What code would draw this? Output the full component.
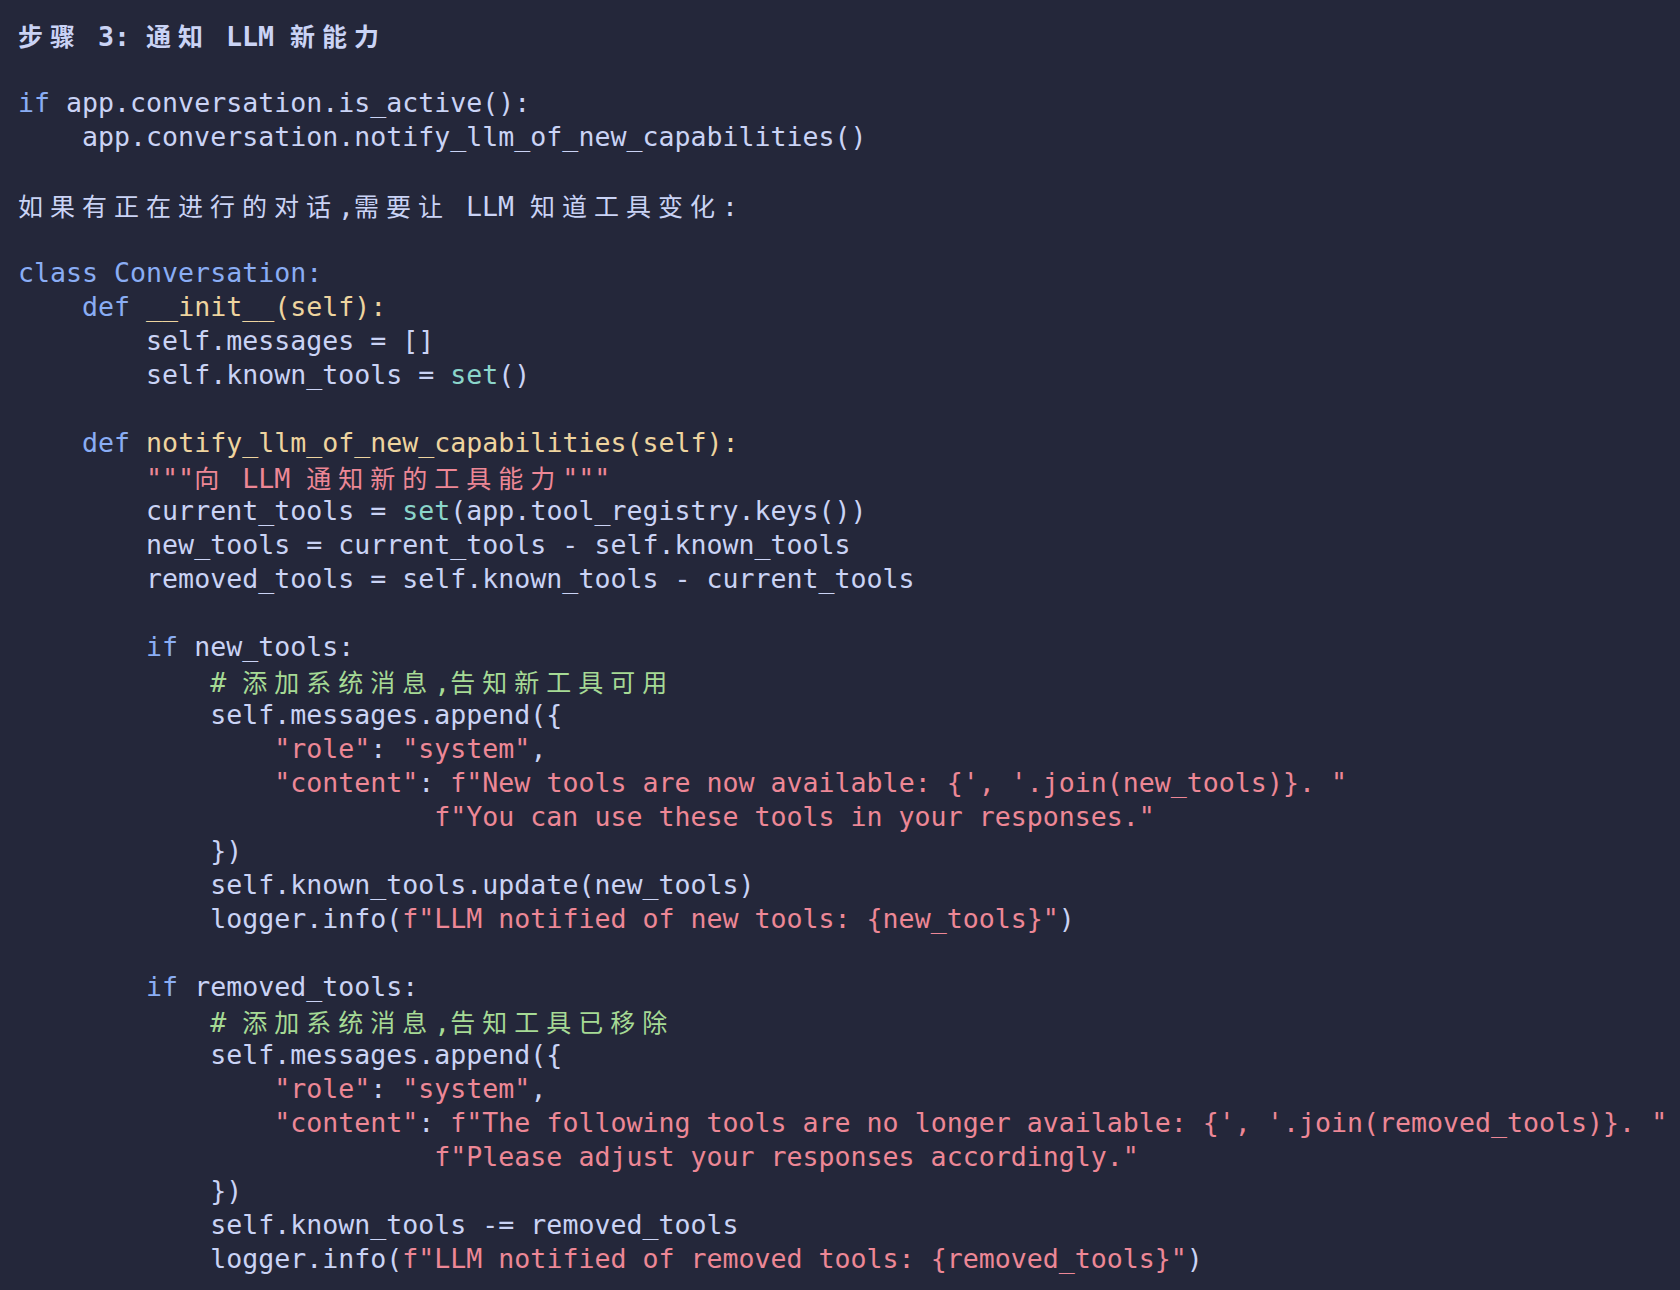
import React from 'react';

// 代码块截图复刻：等宽网格，CJK 字符占两格（32px）

type Tok = [string, string];

const C = {
  text: 'text-[#cad3f5]',
  kw: 'text-[#8aadf4]',
  fn: 'text-[#eed49f]',
  str: 'text-[#ed8796]',
  cm: 'text-[#a6da95]',
  bi: 'text-[#8bd5ca]',
};

const isWide = (ch: string) => /[\u3000-\u9fff\uff00-\uffef]/.test(ch);

function Run({ text, cls }: { text: string; cls: string }) {
  const parts: React.ReactNode[] = [];
  let buf = '';
  const chars = Array.from(text);
  chars.forEach((ch, i) => {
    if (isWide(ch)) {
      if (buf) {
        parts.push(buf);
        buf = '';
      }
      parts.push(
        <span
          key={i}
          className="inline-block w-[32px] text-left text-[25px] [font-family:'Noto_Sans_CJK_SC',sans-serif]"
        >
          {ch}
        </span>,
      );
    } else {
      buf += ch;
    }
  });
  if (buf) parts.push(buf);
  return <span className={cls}>{parts}</span>;
}

const sp = (n: number): Tok => ['text', ' '.repeat(n)];

const lines: Tok[][] = [
  [['kw', 'if'], ['text', ' app.conversation.is_active():']],
  [sp(4), ['text', 'app.conversation.notify_llm_of_new_capabilities()']],
  [],
  [['text', '如果有正在进行的对话,需要让 LLM 知道工具变化:']],
  [],
  [['kw', 'class Conversation:']],
  [sp(4), ['kw', 'def'], ['text', ' '], ['fn', '__init__(self):']],
  [sp(8), ['text', 'self.messages = []']],
  [sp(8), ['text', 'self.known_tools = '], ['bi', 'set'], ['text', '()']],
  [],
  [sp(4), ['kw', 'def'], ['text', ' '], ['fn', 'notify_llm_of_new_capabilities(self):']],
  [sp(8), ['str', '"""向 LLM 通知新的工具能力"""']],
  [sp(8), ['text', 'current_tools = '], ['bi', 'set'], ['text', '(app.tool_registry.keys())']],
  [sp(8), ['text', 'new_tools = current_tools - self.known_tools']],
  [sp(8), ['text', 'removed_tools = self.known_tools - current_tools']],
  [],
  [sp(8), ['kw', 'if'], ['text', ' new_tools:']],
  [sp(12), ['cm', '# 添加系统消息,告知新工具可用']],
  [sp(12), ['text', 'self.messages.append({']],
  [sp(16), ['str', '"role"'], ['text', ': '], ['str', '"system"'], ['text', ',']],
  [sp(16), ['str', '"content"'], ['text', ': '], ['str', `f"New tools are now available: {', '.join(new_tools)}. "`]],
  [sp(26), ['str', 'f"You can use these tools in your responses."']],
  [sp(12), ['text', '})']],
  [sp(12), ['text', 'self.known_tools.update(new_tools)']],
  [sp(12), ['text', 'logger.info('], ['str', 'f"LLM notified of new tools: {new_tools}"'], ['text', ')']],
  [],
  [sp(8), ['kw', 'if'], ['text', ' removed_tools:']],
  [sp(12), ['cm', '# 添加系统消息,告知工具已移除']],
  [sp(12), ['text', 'self.messages.append({']],
  [sp(16), ['str', '"role"'], ['text', ': '], ['str', '"system"'], ['text', ',']],
  [sp(16), ['str', '"content"'], ['text', ': '], ['str', `f"The following tools are no longer available: {', '.join(removed_tools)}. "`]],
  [sp(26), ['str', 'f"Please adjust your responses accordingly."']],
  [sp(12), ['text', '})']],
  [sp(12), ['text', 'self.known_tools -= removed_tools']],
  [sp(12), ['text', 'logger.info('], ['str', 'f"LLM notified of removed tools: {removed_tools}"'], ['text', ')']],
];

export default function App() {
  return (
    <div className="w-[1680px] h-[1290px] overflow-hidden bg-[#24273a] pl-[18px] pt-[18px] text-[26.6px] text-[#cad3f5] [font-family:'DejaVu_Sans_Mono','Noto_Sans_CJK_SC',monospace]">
      {/* 标题 */}
      <div className="h-[34px] leading-[34px] whitespace-pre font-bold">
        <Run text="步骤 3: 通知 LLM 新能力" cls={C.text} />
      </div>
      <div className="h-[34px]" />

      {lines.map((toks, i) => (
        <div key={i} className="h-[34px] leading-[34px] whitespace-pre">
          {toks.map(([k, t], j) => (
            <Run key={j} text={t} cls={C[k as keyof typeof C]} />
          ))}
        </div>
      ))}
    </div>
  );
}
